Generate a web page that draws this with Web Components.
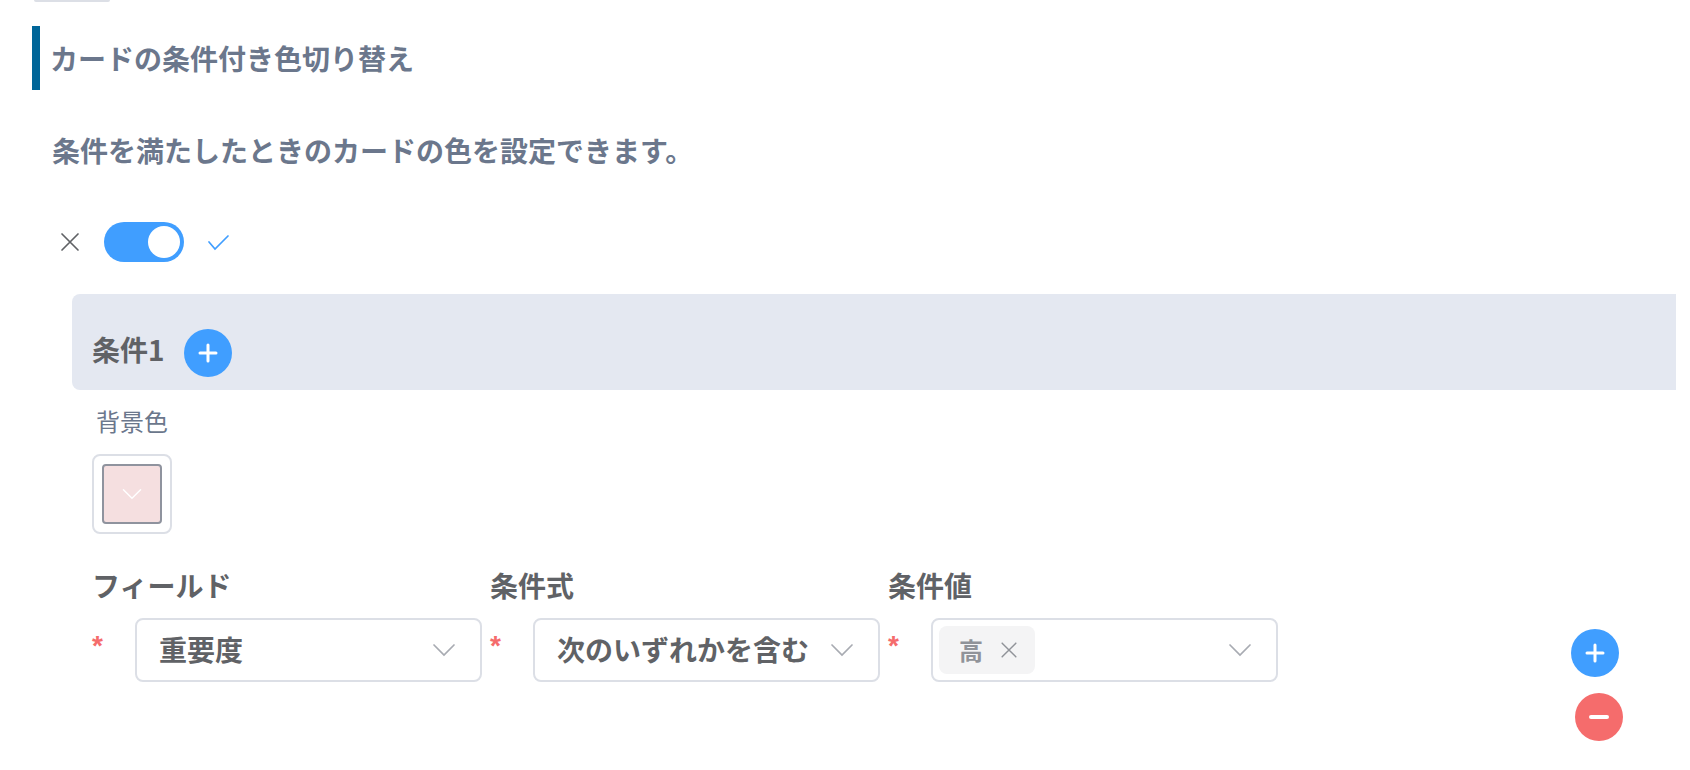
<!DOCTYPE html>
<html lang="ja">
<head>
<meta charset="utf-8">
<title>カードの条件付き色切り替え</title>
<style>
    body {
        margin: 0;
        background: #fff;
        color: #606266;
        font-family: "Noto Sans CJK JP", sans-serif;
        font-size: 28px;
        --sub: #6b778c;
        --line: #dcdfe6;
        --primary: #409eff;
        --danger: #f56c6c;
    }
</style>
</head>
<body>
<card-color-settings></card-color-settings>

<script>
const ICONS = {
    close: '<path d="M6 6 22 22M22 6 6 22"/>',
    check: '<path d="M5 14 11 21 24 8"/>',
    down: '<path d="M4 9 14 19 24 9"/>',
    plus: '<path d="M14 6V22M6 14H22"/>',
    minus: '<path d="M6 14H22"/>'
};

class UiIcon extends HTMLElement {
    constructor() {
        super();
        this.attachShadow({mode : "open"});
    }

    connectedCallback() {
        this.shadowRoot.innerHTML = `
        <style>
            :host {
                display: inline-block;
                width: 28px;
                height: 28px;
                flex: none;
            }

            svg {
                display: block;
                width: 100%;
                height: 100%;
                fill: none;
                stroke: currentColor;
                stroke-width: var(--stroke, 1.7);
                stroke-linecap: round;
                stroke-linejoin: miter;
            }
        </style>
        <svg viewBox="0 0 28 28" aria-hidden="true">${ICONS[this.getAttribute("name")]}</svg>
        `;
    }
}

class SectionTitle extends HTMLElement {
    constructor() {
        super();
        this.attachShadow({mode : "open"}).innerHTML = `
        <style>
            :host {
                display: block;
                border-left: 8px solid #006699;
                padding-left: 10px;
                color: var(--sub);
            }

            h2 {
                margin: 0;
                font-size: 28px;
                line-height: 64px;
            }
        </style>
        <h2><slot></slot></h2>
        `;
    }
}

class ToggleSwitch extends HTMLElement {
    constructor() {
        super();
        this.attachShadow({mode : "open"}).innerHTML = `
        <style>
            :host {
                display: flex;
                align-items: center;
                gap: 20px;
            }

            ui-icon[name="check"] {
                color: var(--primary);
            }

            input {
                appearance: none;
                display: flex;
                align-items: center;
                box-sizing: border-box;
                width: 80px;
                height: 40px;
                margin: 0;
                padding: 4px;
                border-radius: 20px;
                background: var(--line);
                cursor: pointer;
            }

            input::before {
                content: "";
                width: 32px;
                height: 32px;
                border-radius: 50%;
                background: #fff;
            }

            input:checked {
                justify-content: flex-end;
                background: var(--primary);
            }
        </style>
        <ui-icon name="close"></ui-icon>
        <input type="checkbox" role="switch" aria-label="色切り替え" checked>
        <ui-icon name="check"></ui-icon>
        `;
    }
}

class CircleButton extends HTMLElement {
    constructor() {
        super();
        this.attachShadow({mode : "open"});
    }

    connectedCallback() {
        this.shadowRoot.innerHTML = `
        <style>
            :host {
                display: block;
                flex: none;
                --stroke: 3;
            }

            :host([icon="minus"]) {
                --stroke: 4;
            }

            button {
                display: flex;
                align-items: center;
                justify-content: center;
                width: 48px;
                height: 48px;
                padding: 0;
                border: 0;
                border-radius: 50%;
                background: var(--primary);
                color: #fff;
                cursor: pointer;
            }

            :host([icon="minus"]) button {
                background: var(--danger);
            }
        </style>
        <button type="button" aria-label="${this.getAttribute("label")}">
            <ui-icon name="${this.getAttribute("icon")}"></ui-icon>
        </button>
        `;
    }
}

class ColorPicker extends HTMLElement {
    constructor() {
        super();
        this.attachShadow({mode : "open"}).innerHTML = `
        <style>
            :host {
                display: block;
            }

            .caption {
                display: block;
                padding: 0 4px;
                margin-bottom: 14px;
                color: var(--sub);
                font-size: 24px;
                line-height: 38px;
            }

            button {
                display: block;
                box-sizing: border-box;
                width: 80px;
                height: 80px;
                padding: 8px;
                border: 2px solid var(--line);
                border-radius: 8px;
                background: #fff;
                cursor: pointer;
            }

            .swatch {
                display: flex;
                align-items: center;
                justify-content: center;
                box-sizing: border-box;
                height: 60px;
                border: 2px solid #8f939e;
                border-radius: 4px;
                background: #f5dfe0;
                color: #fff;
            }

            ui-icon {
                width: 24px;
                height: 24px;
            }
        </style>
        <label class="caption" for="picker">背景色</label>
        <button type="button" id="picker"><span class="swatch"><ui-icon name="down"></ui-icon></span></button>
        `;
    }
}

class ConditionField extends HTMLElement {
    constructor() {
        super();
        this.attachShadow({mode : "open"});
    }

    connectedCallback() {
        const value = this.getAttribute("value");
        const control = this.hasAttribute("multiple")
            ? `<div class="value">
                    <span class="tag">${value}<button type="button" aria-label="${value}を外す"><ui-icon name="close"></ui-icon></button></span>
                    <input id="control" type="text" role="combobox" aria-expanded="false">
                </div>`
            : `<select id="control"><option>${value}</option></select>`;

        this.shadowRoot.innerHTML = `
        <style>
            :host {
                display: block;
                min-width: 0;
                font-weight: bold;
            }

            label {
                display: block;
                margin-bottom: 14px;
                line-height: 38px;
            }

            .row {
                display: flex;
                margin-right: 8px;
            }

            .required {
                flex: none;
                width: 43px;
                color: var(--danger);
                font-family: "Liberation Sans", sans-serif;
                line-height: 56px;
            }

            .box {
                flex: 1;
                display: grid;
                grid-template-columns: 1fr 50px;
                align-items: center;
                box-sizing: border-box;
                min-width: 0;
                height: 64px;
                border: 2px solid var(--line);
                border-radius: 8px;
            }

            .box > ui-icon {
                grid-area: 1 / 2;
                color: #a8abb2;
                pointer-events: none;
            }

            select {
                grid-area: 1 / 1 / 2 / 3;
                appearance: none;
                min-width: 0;
                height: 60px;
                padding: 0 50px 2px 22px;
                border: 0;
                background: none;
                color: inherit;
                font: inherit;
            }

            .value {
                grid-area: 1 / 1;
                display: flex;
                align-items: center;
                min-width: 0;
            }

            .tag {
                flex: none;
                display: flex;
                align-items: center;
                box-sizing: border-box;
                height: 48px;
                margin-left: 6px;
                padding: 0 14px 0 20px;
                gap: 14px;
                border-radius: 8px;
                background: #f4f4f5;
                color: #909399;
                font-size: 24px;
                line-height: 48px;
            }

            .tag button {
                display: flex;
                padding: 0;
                border: 0;
                background: none;
                color: inherit;
            }

            .tag ui-icon {
                width: 24px;
                height: 24px;
            }

            input {
                flex: 1;
                min-width: 0;
                border: 0;
                background: none;
                font: inherit;
            }
        </style>
        <label for="control">${this.getAttribute("label")}</label>
        <div class="row">
            <span class="required">*</span>
            <div class="box">
                ${control}
                <ui-icon name="down"></ui-icon>
            </div>
        </div>
        `;
    }
}

class CardColorSettings extends HTMLElement {
    constructor() {
        super();
        this.attachShadow({mode : "open"}).innerHTML = `
        <style>
            :host {
                display: block;
                padding: 0 14px 24px 32px;
            }

            /* lower edge of the control above this section */
            .previous {
                width: 76px;
                height: 2px;
                margin: 0 2px 24px;
                border-radius: 0 0 8px 8px;
                background: var(--line);
            }

            .description {
                margin: 28px 20px 40px;
                color: var(--sub);
                font-weight: bold;
                line-height: 64px;
            }

            toggle-switch {
                margin: 0 24px 32px;
            }

            .condition {
                margin-left: 40px;
            }

            header {
                display: flex;
                align-items: flex-start;
                gap: 19px;
                box-sizing: border-box;
                height: 96px;
                padding: 35px 20px 0;
                margin-bottom: 12px;
                border-radius: 8px 0 0 8px;
                background: #e4e8f1;
            }

            h3 {
                margin: 0;
                font-size: 28px;
                line-height: 40px;
            }

            color-picker {
                margin: 0 20px 32px;
            }

            .rule {
                display: grid;
                grid-template-columns: repeat(4, 1fr);
                margin: 0 -8px 0 20px;
            }

            .actions {
                justify-self: end;
                display: flex;
                flex-direction: column;
                gap: 16px;
                padding: 63px 61px 0 0;
            }

            circle-button + circle-button {
                margin-left: 4px;
            }
        </style>
        <div class="previous"></div>
        <section-title>カードの条件付き色切り替え</section-title>
        <p class="description">条件を満たしたときのカードの色を設定できます。</p>
        <toggle-switch></toggle-switch>
        <section class="condition">
            <header>
                <h3>条件1</h3>
                <circle-button icon="plus" label="条件を追加"></circle-button>
            </header>
            <color-picker></color-picker>
            <div class="rule">
                <condition-field label="フィールド" value="重要度"></condition-field>
                <condition-field label="条件式" value="次のいずれかを含む"></condition-field>
                <condition-field label="条件値" value="高" multiple></condition-field>
                <div class="actions">
                    <circle-button icon="plus" label="条件式を追加"></circle-button>
                    <circle-button icon="minus" label="条件式を削除"></circle-button>
                </div>
            </div>
        </section>
        `;
    }
}

customElements.define("ui-icon", UiIcon);
customElements.define("section-title", SectionTitle);
customElements.define("toggle-switch", ToggleSwitch);
customElements.define("circle-button", CircleButton);
customElements.define("color-picker", ColorPicker);
customElements.define("condition-field", ConditionField);
customElements.define("card-color-settings", CardColorSettings);
</script>
</body>
</html>
